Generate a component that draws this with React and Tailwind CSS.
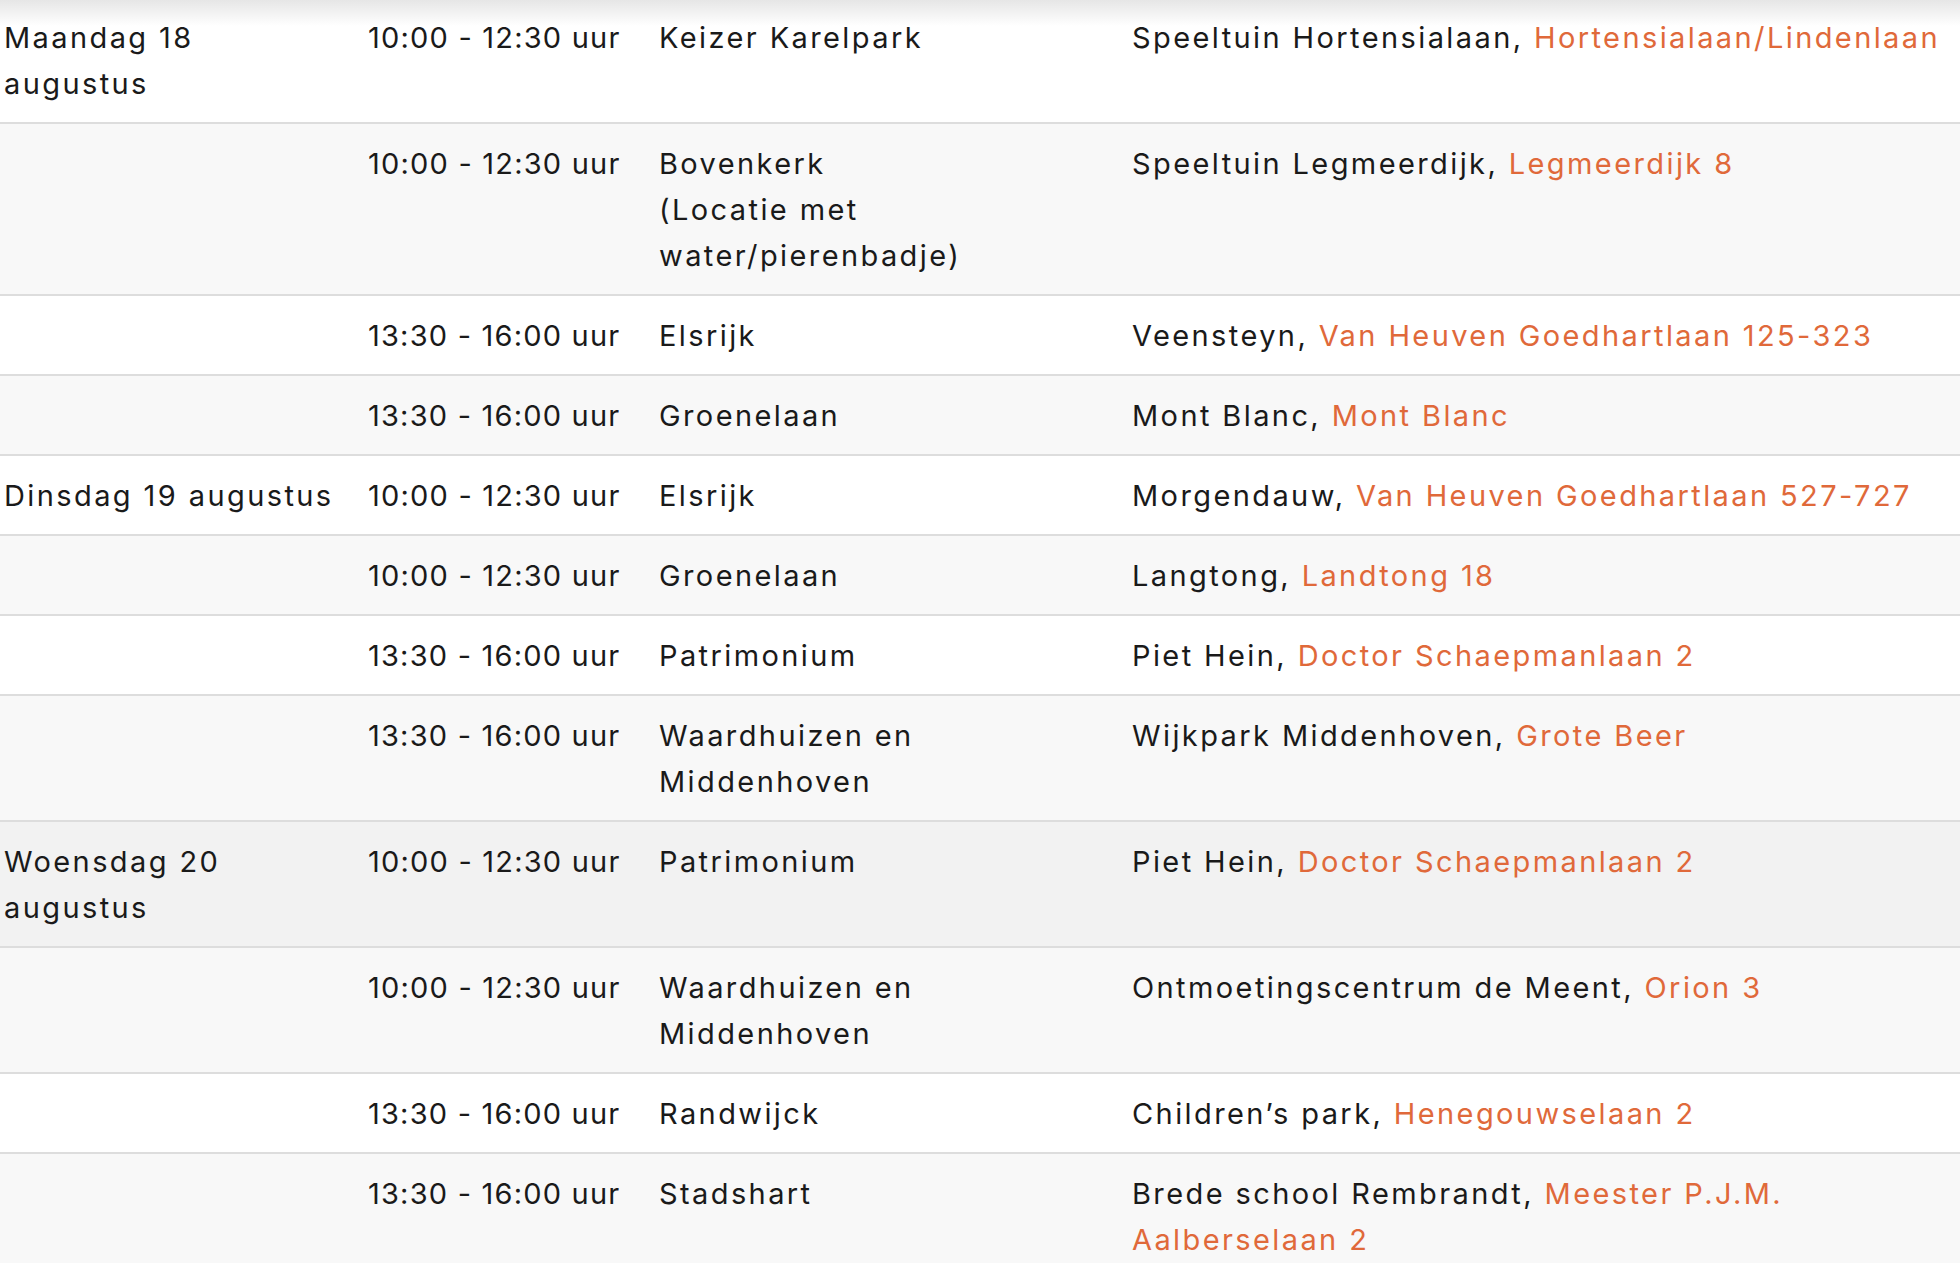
import React from "react";

const rows = [
  { day: "Maandag 18 augustus", time: "10:00 - 12:30 uur", area: ["Keizer Karelpark"], place: "Speeltuin Hortensialaan", addr: "Hortensialaan/Lindenlaan", bg: "bg-white" },
  { day: "", time: "10:00 - 12:30 uur", area: ["Bovenkerk", "(Locatie met water/pierenbadje)"], place: "Speeltuin Legmeerdijk", addr: "Legmeerdijk 8", bg: "bg-[#f8f8f8]" },
  { day: "", time: "13:30 - 16:00 uur", area: ["Elsrijk"], place: "Veensteyn", addr: "Van Heuven Goedhartlaan 125-323", bg: "bg-white" },
  { day: "", time: "13:30 - 16:00 uur", area: ["Groenelaan"], place: "Mont Blanc", addr: "Mont Blanc", bg: "bg-[#f8f8f8]" },
  { day: "Dinsdag 19 augustus", time: "10:00 - 12:30 uur", area: ["Elsrijk"], place: "Morgendauw", addr: "Van Heuven Goedhartlaan 527-727", bg: "bg-white" },
  { day: "", time: "10:00 - 12:30 uur", area: ["Groenelaan"], place: "Langtong", addr: "Landtong 18", bg: "bg-[#f8f8f8]" },
  { day: "", time: "13:30 - 16:00 uur", area: ["Patrimonium"], place: "Piet Hein", addr: "Doctor Schaepmanlaan 2", bg: "bg-white" },
  { day: "", time: "13:30 - 16:00 uur", area: ["Waardhuizen en Middenhoven"], place: "Wijkpark Middenhoven", addr: "Grote Beer", bg: "bg-[#f8f8f8]" },
  { day: "Woensdag 20 augustus", time: "10:00 - 12:30 uur", area: ["Patrimonium"], place: "Piet Hein", addr: "Doctor Schaepmanlaan 2", bg: "bg-[#f2f2f2]" },
  { day: "", time: "10:00 - 12:30 uur", area: ["Waardhuizen en Middenhoven"], place: "Ontmoetingscentrum de Meent", addr: "Orion 3", bg: "bg-[#f8f8f8]" },
  { day: "", time: "13:30 - 16:00 uur", area: ["Randwijck"], place: "Children’s park", addr: "Henegouwselaan 2", bg: "bg-white" },
  { day: "", time: "13:30 - 16:00 uur", area: ["Stadshart"], place: "Brede school Rembrandt", addr: ["Meester P.J.M.", "Aalberselaan 2"], bg: "bg-[#f8f8f8]" },
];

export default function App() {
  return (
    <div className="relative w-[1960px] h-[1263px] overflow-hidden bg-white text-[#1a1a1a] font-['Inter',sans-serif] text-[29px] leading-[46px] tracking-[2.4px]">
      <div className="pointer-events-none absolute inset-x-0 top-0 z-10 h-[26px] bg-gradient-to-b from-[#e6e6e6] to-transparent" />
      <table className="w-full table-fixed border-collapse -mt-[2px]">
        <colgroup>
          <col className="w-[364px]" />
          <col className="w-[291px]" />
          <col className="w-[473px]" />
          <col />
        </colgroup>
        <tbody>
          {rows.map((r, i) => (
            <tr key={i} className={`${r.bg} border-b-2 border-[#dddddd] align-top`}>
              <td className="pl-1 pr-5 pt-[17px] pb-[15px]">{r.day}</td>
              <td className="pl-1 pr-2 pt-[17px] pb-[15px] whitespace-nowrap tracking-[1.2px]">{r.time}</td>
              <td className="pl-1 pr-3 pt-[17px] pb-[15px]">
                {r.area.map((line, j) => (
                  <div key={j}>{line}</div>
                ))}
              </td>
              <td className="pl-1 pr-1 pt-[17px] pb-[15px]">
                {Array.isArray(r.addr) ? (
                  <>
                    <div>
                      {r.place}, <a className="text-[#e0693a]">{r.addr[0]}</a>
                    </div>
                    <div className="text-[#e0693a]">{r.addr[1]}</div>
                  </>
                ) : (
                  <>
                    {r.place}, <a className="text-[#e0693a]">{r.addr}</a>
                  </>
                )}
              </td>
            </tr>
          ))}
        </tbody>
      </table>
    </div>
  );
}
